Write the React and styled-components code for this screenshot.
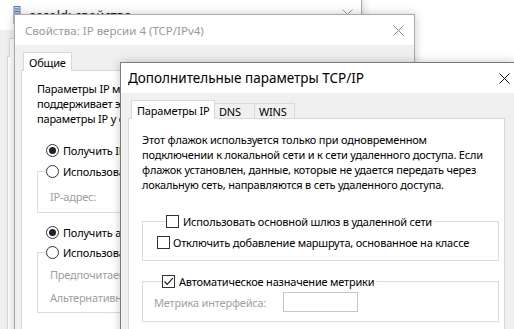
import React from "react";
import styled, { createGlobalStyle } from "styled-components";

const Global = createGlobalStyle`
  html, body { margin: 0; padding: 0; background: #fff; }
  * { box-sizing: border-box; }
`;

const Desktop = styled.div`
  position: relative;
  width: 514px;
  height: 329px;
  overflow: hidden;
  background: #fff;
  font-family: "Noto Sans", "Open Sans", sans-serif;
  font-size: 11px;
  letter-spacing: -0.2px;
  color: #000;
`;

const Window = styled.div`
  position: absolute;
  z-index: ${(p) => p.$z};
  left: ${(p) => p.$x}px;
  top: ${(p) => p.$y}px;
  width: ${(p) => p.$w}px;
  height: ${(p) => p.$h}px;
  background: #f0f0f0;
  border: 1px solid ${(p) => (p.$active ? "#7c7c7c" : "#aaaaaa")};
  box-shadow: 0 0 9px rgba(0, 0, 0, 0.22);
  display: flex;
  flex-direction: column;
`;

const TitleBar = styled.div`
  flex: none;
  height: ${(p) => p.$h}px;
  background: #fff;
  display: flex;
  align-items: center;
  padding-left: ${(p) => p.$pad}px;
  gap: 8px;
  color: ${(p) => (p.$active ? "#000" : "#999")};
  font-size: ${(p) => p.$fs}px;
  letter-spacing: 0;
`;

const TitleText = styled.span`
  flex: 1;
  white-space: nowrap;
  overflow: hidden;
  color: ${(p) => p.$color || "inherit"};
`;

const CloseBtn = styled.div`
  flex: none;
  width: ${(p) => p.$w}px;
  height: 100%;
  display: flex;
  align-items: center;
  justify-content: center;
`;

const Body = styled.div`
  flex: 1;
  display: flex;
  flex-direction: column;
  padding: ${(p) => p.$pad};
  min-height: 0;
`;

const TabRow = styled.div`
  flex: none;
  display: flex;
  align-items: flex-end;
  padding-left: ${(p) => p.$indent}px;
  margin-bottom: -1px;
  position: relative;
  z-index: 1;
`;

const Tab = styled.div`
  width: ${(p) => p.$w}px;
  height: ${(p) => (p.$sel ? 19 : 16)}px;
  background: ${(p) => (p.$sel ? "#fff" : "#f0f0f0")};
  border: 1px solid #d9d9d9;
  border-bottom: ${(p) => (p.$sel ? "none" : "1px solid #d9d9d9")};
  margin-left: ${(p) => (p.$first ? 0 : -1)}px;
  display: flex;
  align-items: center;
  padding-left: ${(p) => (p.$sel ? 5 : 4)}px;
  white-space: nowrap;
  line-height: 15px;
`;

const Panel = styled.div`
  flex: 1;
  background: #fff;
  border: 1px solid #d9d9d9;
  padding: ${(p) => p.$pad};
  display: flex;
  flex-direction: column;
  min-height: 0;
`;

const Paragraph = styled.p`
  margin: 0;
  line-height: 15px;
  white-space: nowrap;
`;

const Group = styled.fieldset`
  margin: ${(p) => p.$mt}px 0 0 0;
  width: ${(p) => p.$w}px;
  border: 1px solid #dcdcdc;
  padding: ${(p) => p.$pad};
  min-width: 0;
  display: flex;
  flex-direction: column;
`;

const Legend = styled.legend`
  margin-left: ${(p) => p.$ml}px;
  padding: 0 2px 0 0;
`;

const OptionRow = styled.label`
  display: flex;
  align-items: center;
  gap: ${(p) => p.$gap || 4}px;
  height: 15px;
  margin: ${(p) => p.$m || "0"};
  line-height: 15px;
  white-space: nowrap;
  color: #000;
`;

const Box = styled.span`
  flex: none;
  width: 13px;
  height: 13px;
  border: 1px solid #333;
  background: #fff;
  display: flex;
  align-items: center;
  justify-content: center;
`;

const Radio = styled.span`
  flex: none;
  width: 13px;
  height: 13px;
  border: 1px solid #333;
  border-radius: 50%;
  background: #fff;
  display: flex;
  align-items: center;
  justify-content: center;
  &::after {
    content: "";
    display: ${(p) => (p.$on ? "block" : "none")};
    width: 7px;
    height: 7px;
    border-radius: 50%;
    background: #222;
  }
`;

const FieldRow = styled.div`
  display: flex;
  align-items: center;
  height: ${(p) => p.$h || 23}px;
  padding-left: ${(p) => p.$pl}px;
  white-space: nowrap;
  color: #a0a0a0;
`;

const FieldLabel = styled.span`
  flex: none;
  width: ${(p) => p.$w}px;
`;

const TextBox = styled.div`
  flex: none;
  width: ${(p) => p.$w}px;
  height: 20px;
  border: 1px solid #c6c6c6;
  background: #fff;
`;

const CloseIcon = ({ color }) => (
  <svg width="11" height="11" viewBox="0 0 11 11">
    <path d="M0.5 0.5 L10.5 10.5 M10.5 0.5 L0.5 10.5" stroke={color} strokeWidth="1" fill="none" />
  </svg>
);

const NetIcon = () => (
  <svg width="8" height="18" viewBox="0 0 8 18">
    <rect x="1" y="0.5" width="6" height="17" fill="#c9d6e6" stroke="#5a7aa6" strokeWidth="1" />
    <path d="M2 3h4M2 5.5h4M2 8h4M2 10.5h4M2 13h4" stroke="#3c64a0" strokeWidth="1" />
  </svg>
);

const Check = () => (
  <svg width="11" height="11" viewBox="0 0 11 11">
    <path d="M1.5 5.5 L4.2 8.3 L9.8 2.2" stroke="#222" strokeWidth="1.2" fill="none" />
  </svg>
);

export default function App() {
  return (
    <>
      <Global />
      <Desktop>
        {/* Back window: adapter properties */}
        <Window $z={1} $x={-1} $y={-2} $w={363} $h={340}>
          <TitleBar $h={31} $pad={13} $fs={13} $active={false}>
            <NetIcon />
            <TitleText $color="#222">ascold: свойства</TitleText>
            <CloseBtn $w={28}>
              <CloseIcon color="#999" />
            </CloseBtn>
          </TitleBar>
          <Body $pad="8px 7px 0 7px">
            <TabRow $indent={2}>
              <Tab $sel $first $w={60}>Сеть</Tab>
            </TabRow>
            <Panel $pad="10px" />
          </Body>
        </Window>

        {/* Middle window: IPv4 properties */}
        <Window $z={2} $x={14} $y={14} $w={401} $h={340}>
          <TitleBar $h={30} $pad={10} $fs={11.5} $active={false}>
            <TitleText>Свойства: IP версии 4 (TCP/IPv4)</TitleText>
            <CloseBtn $w={31}>
              <CloseIcon color="#8a8a8a" />
            </CloseBtn>
          </TitleBar>
          <Body $pad="7px 6px 0 6px">
            <TabRow $indent={2}>
              <Tab $sel $first $w={49}>Общие</Tab>
            </TabRow>
            <Panel $pad="10px 10px 0 15px">
              <Paragraph>
                Параметры IP могут назначаться автоматически, если сеть
                <br />
                поддерживает эту возможность. В противном случае узнайте
                <br />
                параметры IP у сетевого администратора.
              </Paragraph>
              <OptionRow $m="17px 0 0 9px">
                <Radio $on />
                Получить IP-адрес автоматически
              </OptionRow>
              <Group $mt={6} $w={350} $pad="6px 0 4px 0">
                <Legend $ml={8}>
                  <OptionRow>
                    <Radio />
                    Использовать следующий IP-адрес:
                  </OptionRow>
                </Legend>
                <FieldRow $pl={12}>IP-адрес:</FieldRow>
              </Group>
              <OptionRow $m="12px 0 0 9px">
                <Radio $on />
                Получить адрес DNS-сервера автоматически
              </OptionRow>
              <Group $mt={5} $w={350} $pad="3px 0 3px 0">
                <Legend $ml={8}>
                  <OptionRow>
                    <Radio />
                    Использовать следующие адреса DNS-серверов:
                  </OptionRow>
                </Legend>
                <FieldRow $pl={12}>Предпочитаемый DNS-сервер:</FieldRow>
                <FieldRow $pl={12}>Альтернативный DNS-сервер:</FieldRow>
              </Group>
            </Panel>
          </Body>
        </Window>

        {/* Front window: advanced TCP/IP */}
        <Window $z={3} $x={120} $y={62} $w={396} $h={300} $active>
          <TitleBar $h={30} $pad={7} $fs={13.5} $active>
            <TitleText>Дополнительные параметры TCP/IP</TitleText>
            <CloseBtn $w={22}>
              <CloseIcon color="#111" />
            </CloseBtn>
          </TitleBar>
          <Body $pad="7px 10px 0 7px">
            <TabRow $indent={3}>
              <Tab $sel $first $w={84}>Параметры IP</Tab>
              <Tab $w={41}>DNS</Tab>
              <Tab $w={41}>WINS</Tab>
            </TabRow>
            <Panel $pad="13px 4px 0 13px">
              <Paragraph>
                Этот флажок используется только при одновременном
                <br />
                подключении к локальной сети и к сети удаленного доступа. Если
                <br />
                флажок установлен, данные, которые не удается передать через
                <br />
                локальную сеть, направляются в сеть удаленного доступа.
              </Paragraph>
              <Group $mt={22} $w={357} $pad="6px 0 10px 14px">
                <Legend $ml={9}>
                  <OptionRow>
                    <Box />
                    Использовать основной шлюз в удаленной сети
                  </OptionRow>
                </Legend>
                <OptionRow $gap={3}>
                  <Box />
                  Отключить добавление маршрута, основанное на классе
                </OptionRow>
              </Group>
              <Group $mt={13} $w={357} $pad="3px 0 9px 11px">
                <Legend $ml={8}>
                  <OptionRow>
                    <Box>
                      <Check />
                    </Box>
                    Автоматическое назначение метрики
                  </OptionRow>
                </Legend>
                <FieldRow $h={20} $pl={0}>
                  <FieldLabel $w={129}>Метрика интерфейса:</FieldLabel>
                  <TextBox $w={75} />
                </FieldRow>
              </Group>
            </Panel>
          </Body>
        </Window>
      </Desktop>
    </>
  );
}
